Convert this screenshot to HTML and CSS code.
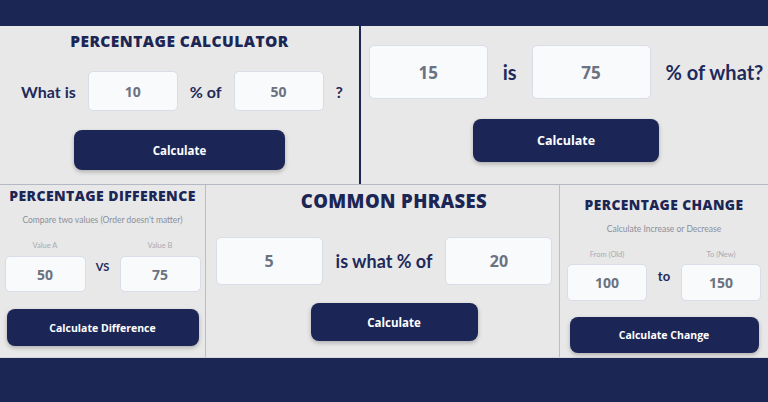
FILE: index.html
```html
<!DOCTYPE html>
<html lang="en">

<head>
    <meta charset="UTF-8">
    <meta name="viewport" content="width=device-width, initial-scale=1.0">
    <title>Percentage Calculator</title>
    <link rel="stylesheet" href="styles.css">
</head>

<body>
    <div class="topbar"></div>

    <div class="row rowTop">
        <!-- what is x % of y -->
        <div class="panel calc">
            <h2 class="title">PERCENTAGE CALCULATOR</h2>
            <div class="line">
                <span class="word">What is</span>
                <input class="field" type="text" value="10">
                <span class="word">% of</span>
                <input class="field" type="text" value="50">
                <span class="word">?</span>
            </div>
            <button class="btn">Calculate</button>
        </div>

        <!-- x is y % of what -->
        <div class="panel ofWhat">
            <div class="line">
                <input class="field" type="text" value="15">
                <span class="word">is</span>
                <input class="field" type="text" value="75">
                <span class="word">% of what?</span>
            </div>
            <button class="btn">Calculate</button>
        </div>
    </div>

    <div class="row rowBottom">
        <div class="panel diff">
            <h2 class="title">PERCENTAGE DIFFERENCE</h2>
            <p class="sub">Compare two values (Order doesn't matter)</p>
            <div class="pair">
                <label class="slot">
                    <span class="hint">Value A</span>
                    <input class="field" type="text" value="50">
                </label>
                <span class="word">VS</span>
                <label class="slot">
                    <span class="hint">Value B</span>
                    <input class="field" type="text" value="75">
                </label>
            </div>
            <button class="btn">Calculate Difference</button>
        </div>

        <div class="panel phrases">
            <h2 class="title">COMMON PHRASES</h2>
            <div class="line">
                <input class="field" type="text" value="5">
                <span class="word">is what % of</span>
                <input class="field" type="text" value="20">
            </div>
            <button class="btn">Calculate</button>
        </div>

        <div class="panel change">
            <h2 class="title">PERCENTAGE CHANGE</h2>
            <p class="sub">Calculate Increase or Decrease</p>
            <div class="pair">
                <label class="slot">
                    <span class="hint">From (Old)</span>
                    <input class="field" type="text" value="100">
                </label>
                <span class="word">to</span>
                <label class="slot">
                    <span class="hint">To (New)</span>
                    <input class="field" type="text" value="150">
                </label>
            </div>
            <button class="btn">Calculate Change</button>
        </div>
    </div>
</body>

</html>
```

FILE: styles.css
```css
* {
    padding: 0;
    margin: 0;
    box-sizing: border-box;
}

body {
    width: 100%;
    height: 100%;
    overflow: hidden;
    background-color: #1c2655;
    font-family: Lato, "Open Sans", sans-serif;
    color: #1e2a5a;
}

.topbar {
    height: 26px;
}

.row {
    display: grid;
}

/* 上面两块，中间深色分隔 */
.rowTop {
    grid-template-columns: 359px 1fr;
    grid-gap: 2px;
    height: 158px;
}

/* 下面三块，灰色细线 */
.rowBottom {
    grid-template-columns: 205px 353px 1fr;
    grid-gap: 1px;
    height: 174px;
    border-top: 1px solid #b4b8c4;
    border-bottom: 1px solid #d4d6dc;
    background-color: #b9bdc8;
}

.panel {
    display: flex;
    flex-direction: column;
    align-items: center;
    background-color: #e8e8e8;
}

.title {
    font-family: "Open Sans", sans-serif;
    font-weight: 800;
    letter-spacing: 0.4px;
    color: #1c2655;
    white-space: nowrap;
}

.line,
.pair {
    display: flex;
    align-items: center;
}

.word {
    font-weight: bold;
    white-space: nowrap;
}

.field {
    background-color: #f8fafc;
    border: 1px solid #d8dde7;
    border-radius: 5px;
    font-family: "Open Sans", sans-serif;
    font-weight: bold;
    color: #6b7280;
    text-align: center;
    outline: none;
}

.btn {
    background-color: #1b2656;
    color: #fff;
    border: none;
    border-radius: 8px;
    font-family: "Open Sans", sans-serif;
    font-weight: bold;
    box-shadow: 0 2px 4px rgba(0, 0, 0, 0.25);
    cursor: pointer;
}

.sub {
    font-size: 8.5px;
    line-height: 10px;
    color: #8a8f9b;
    white-space: nowrap;
}

.slot {
    display: flex;
    flex-direction: column;
    align-items: center;
}

.hint {
    font-size: 7.5px;
    line-height: 10px;
    color: #a7abb5;
}

/* ---- 左上 ---- */
.calc {
    padding-top: 6px;
}

.calc .title {
    font-size: 15.5px;
    line-height: 18px;
    letter-spacing: 0.45px;
}

.calc .line {
    gap: 12px;
    margin-top: 21px;
    margin-left: 5px;
}

.calc .word {
    font-size: 16px;
}

.calc .field {
    width: 90px;
    height: 40px;
    font-size: 14px;
}

.calc .btn {
    width: 211px;
    height: 40px;
    margin-top: 19px;
    font-size: 11.5px;
}

/* ---- 右上 ---- */
.ofWhat {
    padding-top: 19px;
}

.ofWhat .line {
    gap: 15px;
    margin-left: 3px;
}

.ofWhat .word {
    font-size: 20px;
}

.ofWhat .field {
    width: 119px;
    height: 54px;
    font-size: 17px;
}

.ofWhat .btn {
    width: 186px;
    height: 43px;
    margin-top: 20px;
    margin-left: 3px;
    font-size: 12.5px;
}

/* ---- 左下 ---- */
.diff {
    padding-top: 3px;
}

.diff .title {
    font-size: 14px;
    line-height: 16px;
}

.diff .sub {
    margin-top: 11px;
}

.diff .pair {
    gap: 10px;
    margin-top: 16px;
}

.diff .pair .word {
    font-size: 11px;
    width: 14px;
    text-align: center;
}

.diff .field {
    width: 81px;
    height: 36px;
    margin-top: 5px;
    font-size: 14px;
}

.diff .btn {
    width: 192px;
    height: 37px;
    margin-top: 17px;
    font-size: 10.5px;
}

/* ---- 中下 ---- */
.phrases {
    padding: 5px 4px 0 7px;
}

.phrases .title {
    font-size: 18.5px;
    line-height: 22px;
    margin-left: 20px;
}

.phrases .line {
    gap: 13px;
    margin-top: 25px;
}

.phrases .word {
    font-size: 18px;
}

.phrases .field {
    width: 107px;
    height: 48px;
    font-size: 16px;
}

.phrases .btn {
    width: 167px;
    height: 38px;
    margin-top: 18px;
    margin-left: 20px;
    font-size: 11.5px;
}

/* ---- 右下 ---- */
.change {
    padding-top: 12px;
}

.change .title {
    font-size: 13.8px;
    line-height: 16px;
}

.change .sub {
    margin-top: 11px;
}

.change .pair {
    gap: 10px;
    margin-top: 16px;
}

.change .pair .word {
    font-size: 13px;
    width: 14px;
    text-align: center;
}

.change .field {
    width: 80px;
    height: 37px;
    margin-top: 4px;
    font-size: 14px;
}

.change .btn {
    width: 189px;
    height: 36px;
    margin-top: 16px;
    font-size: 10.5px;
}
```
